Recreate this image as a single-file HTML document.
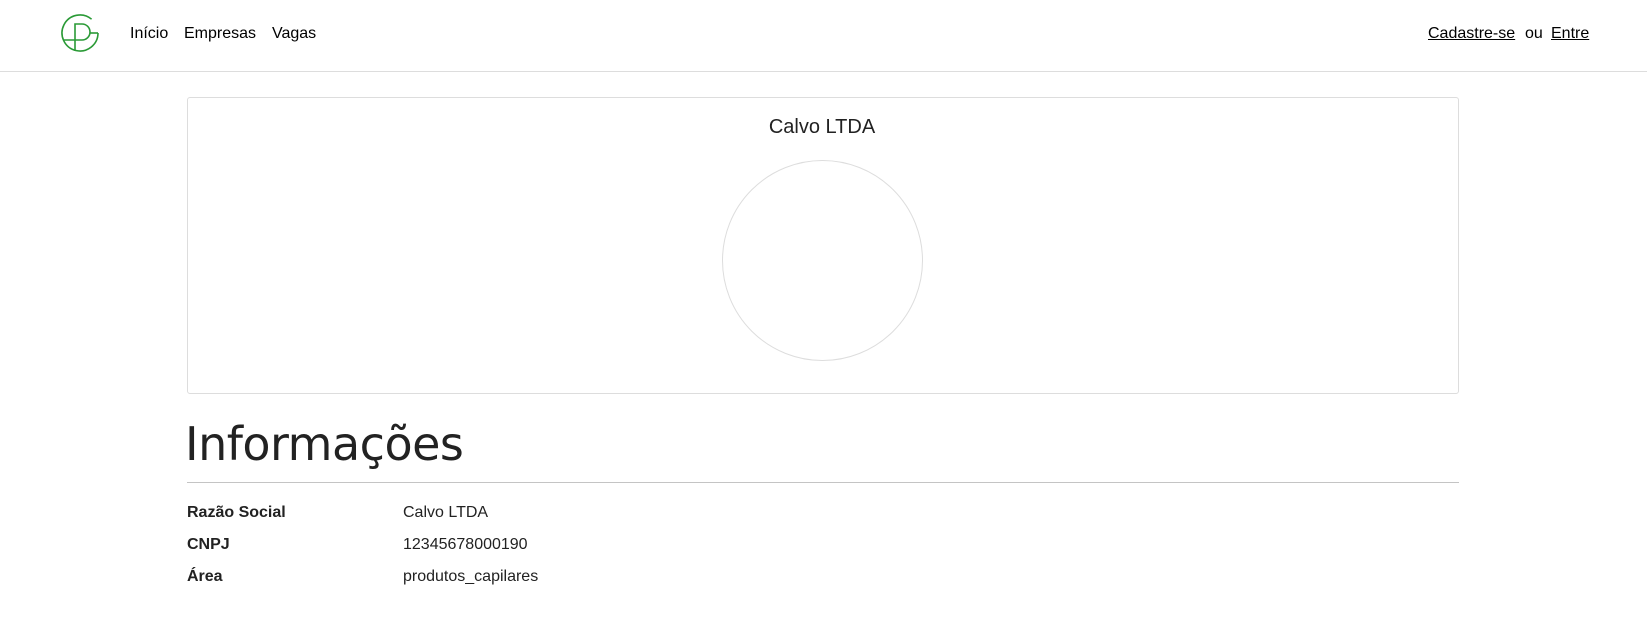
<!DOCTYPE html>
<html><head><meta charset="utf-8"><style>
*{margin:0;padding:0;box-sizing:border-box}
body{width:1647px;height:627px;background:#fff;font-family:"Liberation Sans",sans-serif;color:#000;position:relative;overflow:hidden}
.hdr{position:absolute;left:0;top:0;width:1647px;height:72px;border-bottom:1px solid #ddd}
.t{position:absolute;white-space:nowrap;font-size:16px;line-height:1}
.card{position:absolute;left:187px;top:97px;width:1272px;height:297px;border:1px solid #ddd;border-radius:3px}
.circ{position:absolute;left:722px;top:160px;width:201px;height:201px;border:1px solid #ddd;border-radius:50%}
a{color:#000}
</style></head><body>
<div class="hdr"></div>
<svg style="position:absolute;left:53px;top:5px" width="55" height="55" viewBox="0 0 55 55" fill="none" stroke="#2a9a36" stroke-width="1.6">
<path d="M45 28 A18 18 0 1 1 38.6 14.2"/>
<path d="M45 28 H37"/>
<path d="M22 46 V19 H29 A8 8 0 0 1 29 35 H10"/>
</svg>
<div class="t" style="left:130px;top:26px">Início</div>
<div class="t" style="left:184px;top:26px">Empresas</div>
<div class="t" style="left:272px;top:26px">Vagas</div>
<div class="t" style="left:1428px;top:26px"><a href="#">Cadastre-se</a></div>
<div class="t" style="left:1525px;top:26px">ou</div>
<div class="t" style="left:1551px;top:26px"><a href="#">Entre</a></div>
<div class="card"></div>
<div class="t" style="left:0;width:1644px;text-align:center;top:117px;font-size:20px;color:#222">Calvo LTDA</div>
<div class="circ"></div>
<div class="t" style="left:185px;top:421px;font-size:46px;color:#222;font-family:'DejaVu Sans','Liberation Sans',sans-serif;letter-spacing:-0.5px">Informações</div>
<div style="position:absolute;left:187px;top:482px;width:1272px;height:1px;background:#c4c4c4"></div>
<div class="t" style="left:187px;top:505px;font-weight:bold;color:#222">Razão Social</div>
<div class="t" style="left:403px;top:505px;color:#222">Calvo LTDA</div>
<div class="t" style="left:187px;top:537px;font-weight:bold;color:#222">CNPJ</div>
<div class="t" style="left:403px;top:537px;color:#222">12345678000190</div>
<div class="t" style="left:187px;top:569px;font-weight:bold;color:#222">Área</div>
<div class="t" style="left:403px;top:569px;color:#222">produtos_capilares</div>
</body></html>
